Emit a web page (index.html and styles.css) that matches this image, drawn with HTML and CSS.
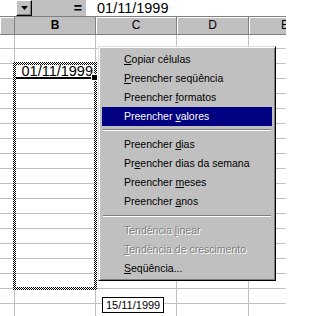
FILE: index.html
```html
<!DOCTYPE html>
<html lang="pt">
<head>
  <meta charset="UTF-8" />
  <title>Preencher</title>
  <link rel="stylesheet" href="styles.css">
</head>
<body>
  <div class="excel">
    <div class="formula-bar">
      <div class="name-box"></div>
      <div class="drop-btn">
        <svg width="7" height="4" viewBox="0 0 7 4"><polygon points="0,0 7,0 3.5,4" fill="#000"/></svg>
      </div>
      <div class="equals">=</div>
      <div class="formula-input">01/11/1999</div>
    </div>

    <div class="col-headers">
      <div class="col-head col-a"></div>
      <div class="col-head col-b selected">B</div>
      <div class="col-head col-c">C</div>
      <div class="col-head col-d">D</div>
      <div class="col-head col-e">E</div>
    </div>

    <div class="sheet">
      <div class="col col-a"></div>
      <div class="col col-b">
        <div class="cell-value">01/11/1999</div>
      </div>
      <div class="col col-c"></div>
      <div class="col col-d"></div>
      <div class="col col-e"></div>
    </div>

    <div class="marching-ants"></div>
    <div class="fill-handle"></div>

    <ul class="context-menu">
      <li><u>C</u>opiar células</li>
      <li><u>P</u>reencher seqüência</li>
      <li>Preencher <u>f</u>ormatos</li>
      <li class="active">Preencher <u>v</u>alores</li>
      <li class="separator"></li>
      <li>Preencher <u>d</u>ias</li>
      <li>Pr<u>e</u>encher dias da semana</li>
      <li>Preencher <u>m</u>eses</li>
      <li>Preencher <u>a</u>nos</li>
      <li class="separator wide"></li>
      <li class="disabled">Tendência <u>l</u>inear</li>
      <li class="disabled"><u>T</u>endência de crescimento</li>
      <li><u>S</u>eqüência...</li>
    </ul>

    <div class="tooltip">15/11/1999</div>
  </div>
</body>
</html>
```

FILE: styles.css
```css
* {
  box-sizing: border-box;
}

body {
  margin: 0;
  background: #fff;
  font-family: 'Liberation Sans', Arial, sans-serif;
  color: #000;
}

.excel {
  position: relative;
  width: 286px;
  height: 316px;
  overflow: hidden;
}

/* formula bar */
.formula-bar {
  display: flex;
  height: 17px;
  background: #c0c0c0;
  border-bottom: 1px solid #808080;
}

.name-box {
  width: 16px;
  background: #fff;
}

.drop-btn {
  width: 16px;
  display: flex;
  align-items: center;
  justify-content: center;
  border: 1px solid;
  border-color: #fff #000 #000 #fff;
  box-shadow: inset -1px -1px #808080;
}

.equals {
  width: 54px;
  padding-right: 4px;
  text-align: right;
  font-weight: bold;
  font-size: 14px;
  line-height: 16px;
}

.formula-input {
  flex: 1;
  background: #fff;
  padding-left: 11px;
  font-size: 14.5px;
  line-height: 16px;
}

/* column headers */
.col-headers {
  display: flex;
  height: 18px;
  border-bottom: 1px solid #808080;
}

.col-head {
  flex: none;
  background: #c0c0c0;
  border-right: 1px solid #808080;
  box-shadow: inset 1px 1px #fff;
  text-align: center;
  font-size: 12px;
  line-height: 17px;
}

.col-head.selected {
  font-weight: bold;
  box-shadow: none;
}

.col-a { width: 15px; }
.col-b { width: 81px; }
.col-c { width: 81px; }
.col-d { width: 72px; }
.col-e { width: 72px; border-right: none; }

/* grid */
.sheet {
  display: flex;
  height: 281px;
}

.col {
  flex: none;
  border-right: 1px solid #c0c0c0;
  background: repeating-linear-gradient(transparent 0 13px, #c0c0c0 13px 14px, transparent 14px 15px);
}

.col.col-e {
  border-right: none;
}

.cell-value {
  margin: 29px 1px 0;
  height: 15px;
  padding-right: 1px;
  border-bottom: 2px solid #000;
  text-align: right;
  font-size: 14.5px;
  line-height: 14px;
}

.marching-ants {
  position: absolute;
  left: 13px;
  top: 62px;
  width: 84px;
  height: 228px;
  padding: 3px;
  background: repeating-conic-gradient(#000 0 25%, #fff 0 50%) 0 0 / 2px 2px;
  -webkit-mask: linear-gradient(#000 0 0) content-box, linear-gradient(#000 0 0);
  -webkit-mask-composite: xor;
  mask-composite: exclude;
}

.fill-handle {
  position: absolute;
  left: 92px;
  top: 75px;
  width: 5px;
  height: 5px;
  background: #000;
  outline: 1px solid #fff;
}

/* context menu */
.context-menu {
  position: absolute;
  left: 98px;
  top: 46px;
  width: 178px;
  margin: 0;
  padding: 3px 3px 2px;
  list-style: none;
  background: #c0c0c0;
  border: 1px solid;
  border-color: #dfdfdf #000 #000 #dfdfdf;
  box-shadow: inset 1px 1px #fff, inset -1px -1px #808080;
  font-size: 10.5px;
}

.context-menu li {
  height: 19px;
  line-height: 19px;
  padding-left: 22px;
  white-space: nowrap;
}

.context-menu u {
  text-underline-offset: 1px;
}

.context-menu li.active {
  background: #000080;
  color: #fff;
}

.context-menu li.disabled {
  color: #808080;
  text-shadow: 1px 1px #fff;
}

.context-menu li.separator {
  height: 9px;
  padding: 3px 1px 0;
}

.context-menu li.separator::before {
  content: '';
  display: block;
  border-top: 1px solid #808080;
  border-bottom: 1px solid #fff;
}

.context-menu li.separator.wide {
  height: 10px;
  padding-top: 4px;
}

.tooltip {
  position: absolute;
  left: 102px;
  top: 297px;
  padding: 0 3px;
  background: #fff;
  border: 1px solid #000;
  font-size: 11px;
  line-height: 14px;
}
```
